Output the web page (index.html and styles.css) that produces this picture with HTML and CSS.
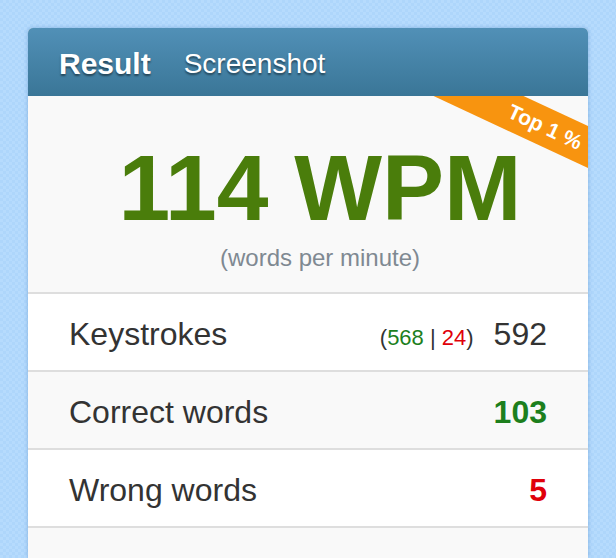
FILE: index.html
```
<!DOCTYPE html>
<html>
<head>
<meta charset="utf-8">
<link rel="stylesheet" href="styles.css">
</head>
<body>
<div class="card">
  <div class="header">
    <span class="title">Result</span>
    <span class="subtitle">Screenshot</span>
  </div>
  <div class="content">
    <div class="summary">
      <div class="ribbon">Top 1 %</div>
      <div class="wpm">114 WPM</div>
      <div class="wpm-label">(words per minute)</div>
    </div>
    <div class="row odd">
      <span class="label">Keystrokes</span>
      <span class="value"><span class="detail">(<span class="good">568</span> | <span class="bad">24</span>)</span>592</span>
    </div>
    <div class="row even">
      <span class="label">Correct words</span>
      <span class="value strong good">103</span>
    </div>
    <div class="row odd">
      <span class="label">Wrong words</span>
      <span class="value strong bad">5</span>
    </div>
    <div class="tail"></div>
  </div>
</div>
</body>
</html>
```

FILE: styles.css
```
html, body {
  margin: 0;
  padding: 0;
}
body {
  width: 616px;
  height: 558px;
  overflow: hidden;
  background-color: #b2d9fc;
  background-image: repeating-conic-gradient(#b6dbfd 0 25%, #aed6fb 0 50%);
  background-size: 6px 6px;
  font-family: "Liberation Sans", Arial, Helvetica, sans-serif;
  padding: 28px 28px 0 28px;
  box-sizing: border-box;
}
.card {
  width: 560px;
  border-radius: 5px 5px 0 0;
  box-shadow: 0 0 4px rgba(40, 100, 170, 0.35);
  background: #f9f9f9;
}
.header {
  height: 68px;
  border-radius: 5px 5px 0 0;
  background: linear-gradient(#5190b7, #3a7697);
  display: flex;
  align-items: center;
  padding-left: 31px;
  gap: 33px;
  color: #fff;
  text-shadow: 0 2px 2px rgba(0, 0, 0, 0.45);
}
.title {
  font-size: 30px;
  font-weight: bold;
  padding-top: 3px;
}
.subtitle {
  font-size: 28px;
  padding-top: 3px;
}
.content {
  overflow: hidden;
  position: relative;
}
.summary {
  position: relative;
  background: #f9f9f9;
  padding: 46px 0 22px 24px;
  text-align: center;
  border-bottom: 2px solid #dedede;
}
.ribbon {
  position: absolute;
  left: 387px;
  top: 12px;
  width: 260px;
  height: 38px;
  line-height: 38px;
  background: #f8940f;
  color: #fff;
  font-weight: bold;
  font-size: 21px;
  text-align: center;
  transform: rotate(25deg);
}
.wpm {
  font-size: 93px;
  line-height: 1;
  font-weight: bold;
  color: #4a7d0b;
}
.wpm-label {
  margin-top: 11px;
  font-size: 24px;
  line-height: 1;
  color: #7f8992;
}
.row {
  border-bottom: 2px solid #dedede;
  display: flex;
  align-items: center;
  justify-content: space-between;
  padding: 4px 41px 0;
  height: 72px;
  color: #333;
  font-size: 32px;
}
.odd {
  background: #fff;
}
.even {
  background: #f9f9f9;
}
.tail {
  height: 30px;
  background: #f9f9f9;
}
.value {
  display: flex;
  align-items: baseline;
}
.detail {
  font-size: 22px;
  margin-right: 20px;
}
.strong {
  font-weight: bold;
}
.good {
  color: #1d7f1d;
}
.bad {
  color: #e0000a;
}
```
